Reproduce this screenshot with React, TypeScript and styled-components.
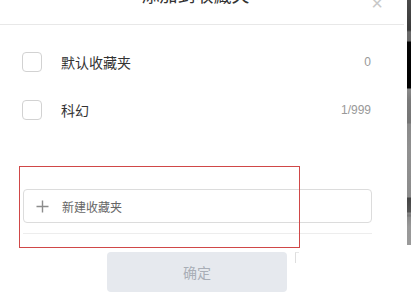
import React from 'react';
import styled, { createGlobalStyle } from 'styled-components';

const GlobalStyle = createGlobalStyle`
    html, body { margin: 0; padding: 0; background: #fff; }
    body { font-family: "Liberation Sans", "Noto Sans CJK SC", sans-serif; }
`;

interface Folder {
    name: string;
    count: string;
}

const folders: Folder[] = [
    { name: '默认收藏夹', count: '0' },
    { name: '科幻', count: '1/999' },
];

const Page = styled.div`
    position: relative;
    width: 411px;
    height: 293px;
    overflow: hidden;
    display: flex;
    align-items: flex-start;
`;

const Dialog = styled.div`
    flex: none;
    width: 420px;
    margin-left: -13px;
    margin-top: -32px;
    background: #fff;
    display: flex;
    flex-direction: column;
`;

const Header = styled.div`
    position: relative;
    height: 56px;
    display: flex;
    align-items: center;
    justify-content: center;
    border-bottom: 1px solid #e8e8e8;
    margin-right: 3px;
`;

const Title = styled.span`
    font-size: 18px;
    line-height: 18px;
    color: #333;
`;

const Close = styled.span`
    position: absolute;
    right: 21px;
    top: 28px;
    font-size: 20px;
    line-height: 14px;
    color: #c8c8c8;
`;

const Body = styled.div`
    padding: 13px 35px 0;
    display: flex;
    flex-direction: column;
`;

const Row = styled.label`
    height: 48px;
    display: flex;
    align-items: center;
`;

const Check = styled.span`
    width: 18px;
    height: 18px;
    border: 1px solid #d2d2d2;
    border-radius: 4px;
    flex: none;
`;

const Name = styled.span`
    margin-left: 19px;
    flex: 1;
    font-size: 14px;
    color: #333;
`;

const Count = styled.span`
    font-size: 12px;
    color: #999;
    margin-right: 1px;
`;

const NewFolder = styled.div`
    margin-top: 55px;
    margin-left: 1px;
    height: 32px;
    border: 1px solid #dcdcdc;
    border-radius: 4px;
    display: flex;
    align-items: center;
    padding-left: 12px;
    gap: 13px;
`;

const NewLabel = styled.span`
    font-size: 12px;
    color: #666;
`;

const Divider = styled.div`
    margin-top: 10px;
    margin-left: 1px;
    height: 1px;
    background: #ededed;
`;

const Footer = styled.div`
    display: flex;
    justify-content: center;
    padding-top: 18px;
`;

const Confirm = styled.button`
    width: 180px;
    height: 40px;
    border: none;
    border-radius: 4px;
    background: #e6e9ee;
    color: #a9aeb6;
    font-family: inherit;
    font-size: 14px;
    padding: 0;
`;

const Strip = styled.div`
    flex: 1;
    height: 245px;
    background: linear-gradient(
        #4a4a4a 0, #3a3a3a 30px, #6a6a6a 32px, #666 41px, #050505 42px, #000 88px,
        #8a8a8a 89px, #7a7a7a 100px, #757575 123px, #8a8a8a 124px, #909090 150px,
        #8c8c8c 197px, #444 198px, #555 212px, #888 213px, #777 216px, #8a8a8a 217px,
        #999 227px, #9a9a9a 245px
    );
`;

const Highlight = styled.div`
    position: absolute;
    left: 19px;
    top: 166px;
    width: 279px;
    height: 80px;
    border: 1px solid #d04848;
    pointer-events: none;
`;

const Corner = styled.span`
    position: absolute;
    left: 295px;
    top: 252px;
    width: 3px;
    height: 10px;
    border-left: 1px solid #dedede;
    border-top: 1px solid #e8e8e8;
`;

const PlusIcon = () => (
    <svg width="13" height="13" viewBox="0 0 13 13" fill="none">
        <path d="M6.5 0.5V12.5M0.5 6.5H12.5" stroke="#8c8c8c" strokeWidth={1.4} />
    </svg>
);

export default function App() {
    return (
        <>
            <GlobalStyle />
            <Page>
                <Dialog>
                    <Header>
                        <Title>添加到收藏夹</Title>
                        <Close>×</Close>
                    </Header>
                    <Body>
                        {folders.map((f) => (
                            <Row key={f.name}>
                                <Check />
                                <Name>{f.name}</Name>
                                <Count>{f.count}</Count>
                            </Row>
                        ))}
                        <NewFolder>
                            <PlusIcon />
                            <NewLabel>新建收藏夹</NewLabel>
                        </NewFolder>
                        <Divider />
                    </Body>
                    <Footer>
                        <Confirm>确定</Confirm>
                    </Footer>
                </Dialog>
                <Strip />
                <Highlight />
                <Corner />
            </Page>
        </>
    );
}
